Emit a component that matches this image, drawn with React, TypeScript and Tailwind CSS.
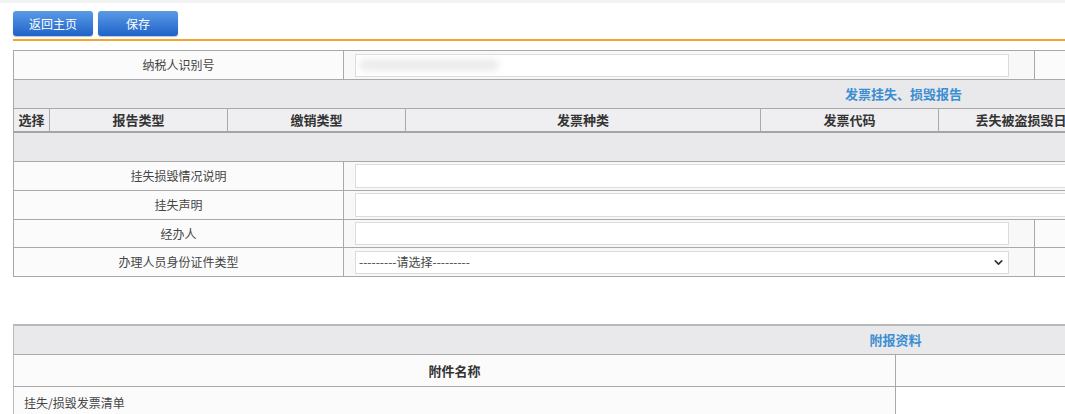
import { ChevronDown } from "lucide-react"

const font = { fontFamily: '"Microsoft YaHei","Noto Sans CJK SC",sans-serif' }

function Btn({ label }: { label: string }) {
  return (
    <button className="h-[25px] w-[80px] rounded-[3px] bg-gradient-to-b from-[#5a9be6] to-[#1f62c8] text-[12px] text-white shadow-[0_1px_1px_rgba(0,0,0,0.25)]">
      {label}
    </button>
  )
}

function Label({ text }: { text: string }) {
  return (
    <div className="flex w-[330px] shrink-0 items-center justify-center border-r border-[#a9a9a9] bg-[#fbfbfc] text-[12px] text-[#444]">
      {text}
    </div>
  )
}

function ShortInput({ children }: { children?: React.ReactNode }) {
  return (
    <>
      <div className="flex w-[690px] shrink-0 items-center bg-[#f8f8f9] pl-[11px]">
        <div className="flex h-[23px] w-[654px] items-center border border-[#dcdcdc] bg-white px-[3px] text-[12px] text-[#444]">
          {children}
        </div>
      </div>
      <div className="w-[760px] shrink-0 border-l border-[#a9a9a9] bg-[#fbfbfc]" />
    </>
  )
}

function LongInput() {
  return (
    <div className="flex flex-1 items-center bg-[#f8f8f9] pl-[11px]">
      <div className="h-[24px] w-full border border-[#dcdcdc] bg-white" />
    </div>
  )
}

const heads = [
  { t: "选择", w: "w-[36px]" },
  { t: "报告类型", w: "w-[178px]" },
  { t: "缴销类型", w: "w-[178px]" },
  { t: "发票种类", w: "w-[355px]" },
  { t: "发票代码", w: "w-[178px]" },
  { t: "丢失被盗损毁日期", w: "w-[178px]" },
  { t: "备注", w: "w-[677px]" },
]

export default function App() {
  return (
    <div className="h-[414px] w-full overflow-hidden bg-white" style={font}>
      <div className="h-[3px] bg-[#f3f3f3]" />
      <div className="flex gap-[5px] pl-[13px] pt-[8px]">
        <Btn label="返回主页" />
        <Btn label="保存" />
      </div>
      <div className="ml-[13px] mt-[3px] h-[2px] bg-[#f0a630]" />

      <div className="ml-[13px] mt-[9px] w-[1780px] border-l border-t border-[#a9a9a9]">
        <div className="flex h-[29px] border-b border-[#a9a9a9]">
          <Label text="纳税人识别号" />
          <ShortInput>
            <span className="h-[12px] w-[140px] rounded-full bg-[#ececec] blur-[3px]" />
          </ShortInput>
        </div>
        <div className="flex h-[29px] items-center justify-center border-b border-[#a9a9a9] bg-[#e9e8ea] text-[13px] font-bold text-[#3b8ed2]">
          发票挂失、损毁报告
        </div>
        <div className="flex h-[24px] border-b-2 border-[#a4a4a4] bg-[#efeef0]">
          {heads.map((h) => (
            <div
              key={h.t}
              className={`${h.w} flex shrink-0 items-center justify-center border-r border-[#a9a9a9] text-[13px] font-bold text-[#333]`}
            >
              {h.t}
            </div>
          ))}
        </div>
        <div className="h-[29px] border-b border-[#a9a9a9] bg-[#e9e8ea]" />
        <div className="flex h-[29px] border-b border-[#a9a9a9]">
          <Label text="挂失损毁情况说明" />
          <LongInput />
        </div>
        <div className="flex h-[29px] border-b border-[#a9a9a9]">
          <Label text="挂失声明" />
          <LongInput />
        </div>
        <div className="flex h-[28px] border-b border-[#a9a9a9]">
          <Label text="经办人" />
          <ShortInput />
        </div>
        <div className="flex h-[29px] border-b border-[#a9a9a9]">
          <Label text="办理人员身份证件类型" />
          <ShortInput>
            <span className="flex-1">---------请选择---------</span>
            <ChevronDown size={13} strokeWidth={3} className="text-[#333]" />
          </ShortInput>
        </div>
      </div>

      <div className="ml-[13px] mt-[47px] w-[1764px] border-l border-t-2 border-[#b9b9b9]">
        <div className="flex h-[29px] items-center justify-center border-b border-[#a9a9a9] bg-[#e9e8ea] text-[13px] font-bold text-[#3b8ed2]">
          附报资料
        </div>
        <div className="flex h-[32px] border-b border-[#a9a9a9] bg-[#fbfbfc]">
          <div className="flex w-[882px] shrink-0 items-center justify-center border-r border-[#a9a9a9] text-[13px] font-bold text-[#333]">
            附件名称
          </div>
          <div className="flex-1" />
        </div>
        <div className="flex h-[32px] bg-[#fbfbfc]">
          <div className="flex w-[882px] shrink-0 items-center border-r border-[#a9a9a9] pl-[10px] text-[12px] text-[#444]">
            挂失/损毁发票清单
          </div>
          <div className="flex-1 bg-white" />
        </div>
      </div>
    </div>
  )
}
